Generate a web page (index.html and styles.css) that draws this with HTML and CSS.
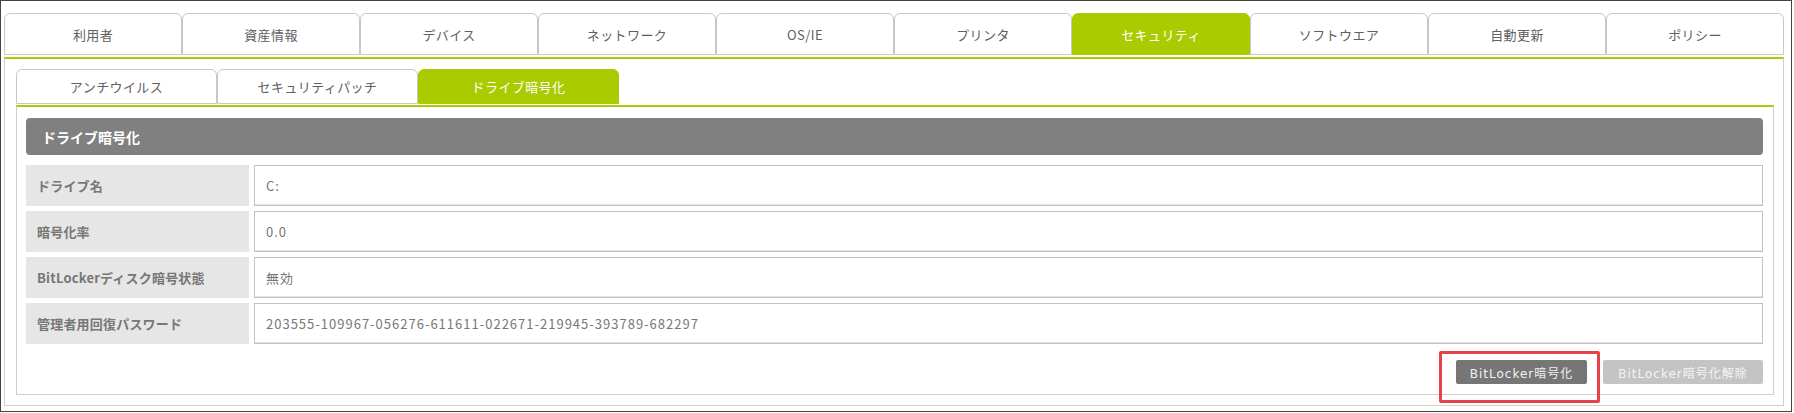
FILE: index.html
```html
<!DOCTYPE html>
<html lang="ja">
<head>
<meta charset="utf-8">
<title>ドライブ暗号化</title>
<link rel="stylesheet" href="styles.css">
</head>
<body>
<div class="frame">
  <div class="main-tabs">
    <div class="tab">利用者</div>
    <div class="tab">資産情報</div>
    <div class="tab">デバイス</div>
    <div class="tab">ネットワーク</div>
    <div class="tab">OS/IE</div>
    <div class="tab">プリンタ</div>
    <div class="tab active">セキュリティ</div>
    <div class="tab">ソフトウエア</div>
    <div class="tab">自動更新</div>
    <div class="tab">ポリシー</div>
  </div>
  <div class="panel outer">
    <div class="sub-tabs">
      <div class="tab sub">アンチウイルス</div>
      <div class="tab sub">セキュリティパッチ</div>
      <div class="tab sub active">ドライブ暗号化</div>
    </div>
    <div class="panel inner">
      <div class="section-head">ドライブ暗号化</div>
      <div class="rows">
        <div class="row"><div class="label">ドライブ名</div><div class="value">C:</div></div>
        <div class="row"><div class="label">暗号化率</div><div class="value">0.0</div></div>
        <div class="row"><div class="label">BitLockerディスク暗号状態</div><div class="value">無効</div></div>
        <div class="row"><div class="label">管理者用回復パスワード</div><div class="value">203555-109967-056276-611611-022671-219945-393789-682297</div></div>
      </div>
      <div class="actions">
        <div class="btn-wrap">
          <button class="btn primary">BitLocker暗号化</button>
          <span class="highlight"></span>
        </div>
        <button class="btn disabled">BitLocker暗号化解除</button>
      </div>
    </div>
  </div>
</div>
</body>
</html>
```

FILE: styles.css
```css
* { box-sizing: border-box; }
html, body { margin: 0; padding: 0; background: #fff; }
body {
  font-family: "Noto Sans CJK JP", "Noto Sans", sans-serif;
  font-size: 13px;
  color: #666;
}
.frame {
  width: 1792px;
  height: 412px;
  border: 1px solid #444;
  padding: 12px 7px 4px 3px;
  display: flex;
  flex-direction: column;
}
.main-tabs {
  display: flex;
  width: 1780px;
  margin-bottom: 2px;
}
.tab {
  flex: 1;
  height: 42px;
  border: 1px solid #c8c8c8;
  border-radius: 6px 6px 0 0;
  background: #fff;
  color: #606060;
  display: flex;
  align-items: center;
  justify-content: center;
  line-height: 1;
  letter-spacing: 0.4px;
}
.tab.active {
  background: #aacb00;
  border-color: #aacb00;
  color: #fff;
}
.panel {
  border: 1px solid #cfcfcf;
  border-top: 2px solid #aacb00;
  background: #fff;
}
.outer {
  width: 1780px;
  padding: 10px 9px 10px 11px;
}
.sub-tabs {
  display: flex;
  margin-bottom: 1px;
}
.tab.sub {
  flex: 0 0 201px;
  height: 35px;
}
.inner {
  padding: 11px 10px 10px 9px;
}
.section-head {
  height: 37px;
  background: #808080;
  border-radius: 4px;
  color: #fff;
  font-weight: bold;
  font-size: 14px;
  display: flex;
  align-items: center;
  padding-left: 16px;
  margin-bottom: 10px;
}
.rows {
  display: flex;
  flex-direction: column;
  gap: 5px;
}
.row {
  display: flex;
  gap: 5px;
  height: 41px;
}
.label {
  flex: 0 0 223px;
  background: #e6e6e6;
  color: #777;
  font-weight: bold;
  display: flex;
  align-items: center;
  padding-left: 11px;
  letter-spacing: 0.2px;
}
.value {
  flex: 1;
  border: 1px solid #c2c2c2;
  box-shadow: inset 0 -1px 0 #e4e4e4;
  color: #777;
  display: flex;
  align-items: center;
  padding-left: 11px;
  letter-spacing: 1px;
}
.actions {
  display: flex;
  justify-content: flex-end;
  gap: 16px;
  margin-top: 16px;
}
.btn-wrap {
  position: relative;
  display: flex;
}
.btn {
  height: 24px;
  border: none;
  border-radius: 2px;
  font-family: "DejaVu Sans", "Noto Sans CJK JP", sans-serif;
  font-size: 12px;
  letter-spacing: 1px;
  color: #f2f2f2;
  padding: 0;
}
.btn.primary {
  width: 131px;
  background: #767676;
}
.btn.disabled {
  width: 160px;
  background: #c4c4c4;
  color: #f4f4f4;
}
.highlight {
  position: absolute;
  left: -17px;
  right: -13px;
  top: -9px;
  bottom: -19px;
  border: 3px solid #e8414a;
  border-radius: 2px;
  pointer-events: none;
}
```
